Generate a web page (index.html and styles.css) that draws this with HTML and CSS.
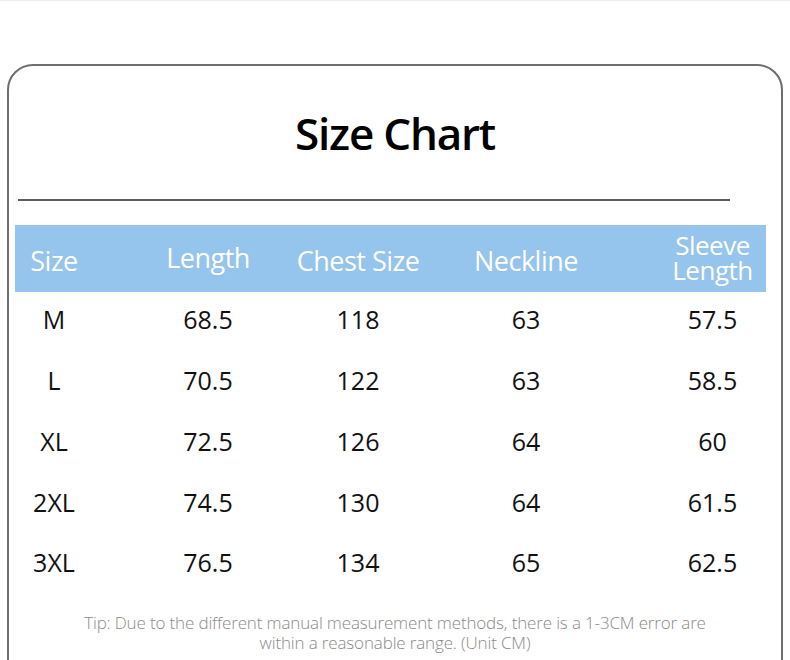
FILE: index.html
```html
<!DOCTYPE html>
<html lang="en">
<head>
<meta charset="utf-8">
<title>Size Chart</title>
<link rel="stylesheet" href="styles.css">
</head>
<body>
<div class="topline"></div>
<div class="card">
  <h1 class="title">Size Chart</h1>
  <div class="divider"></div>
  <div class="table">
    <div class="row head">
      <div class="cell">Size</div>
      <div class="cell up">Length</div>
      <div class="cell">Chest Size</div>
      <div class="cell">Neckline</div>
      <div class="cell two">Sleeve<br>Length</div>
    </div>
    <div class="body">
      <div class="row"><div class="cell">M</div><div class="cell">68.5</div><div class="cell">118</div><div class="cell">63</div><div class="cell">57.5</div></div>
      <div class="row"><div class="cell">L</div><div class="cell">70.5</div><div class="cell">122</div><div class="cell">63</div><div class="cell">58.5</div></div>
      <div class="row"><div class="cell">XL</div><div class="cell">72.5</div><div class="cell">126</div><div class="cell">64</div><div class="cell">60</div></div>
      <div class="row"><div class="cell">2XL</div><div class="cell">74.5</div><div class="cell">130</div><div class="cell">64</div><div class="cell">61.5</div></div>
      <div class="row"><div class="cell">3XL</div><div class="cell">76.5</div><div class="cell">134</div><div class="cell">65</div><div class="cell">62.5</div></div>
    </div>
  </div>
  <p class="tip">Tip: Due to the different manual measurement methods, there is a 1-3CM error are<br>within a reasonable range. (Unit CM)</p>
</div>
</body>
</html>
```
FILE: styles.css
```css
html, body {
  margin: 0;
  padding: 0;
  background: #ffffff;
  overflow: hidden;
}
body {
  width: 790px;
  height: 660px;
  font-family: "Open Sans", "Noto Sans", sans-serif;
}
.topline {
  height: 1px;
  background: #eeeeee;
}
.card {
  margin: 63px 0 0 7px;
  width: 772px;
  height: 700px;
  border: 2px solid #6e6e6e;
  border-radius: 26px;
  box-sizing: content-box;
}
.title {
  margin: 0;
  padding-top: 37px;
  height: 63px;
  text-align: center;
  font-size: 44px;
  line-height: 60px;
  font-weight: 600;
  letter-spacing: -1.2px;
  color: #000;
}
.divider {
  margin: 33px 0 0 9px;
  width: 712px;
  height: 2px;
  background: #5c5c5c;
}
.table {
  margin: 24px 0 0 6px;
  width: 751px;
}
.row {
  display: grid;
  grid-template-columns: 78px 230px 70px 266px 107px;
  height: 60.75px;
}
.head {
  height: 67px;
  background: #95c4ec;
  color: #ffffff;
  font-size: 27px;
  letter-spacing: -0.5px;
}
.head .cell {
  padding-top: 4px;
}
.head .up {
  padding-top: 0;
  padding-bottom: 3px;
}
.head .two {
  font-size: 26px;
  line-height: 25px;
  padding-top: 0;
  padding-bottom: 1px;
  text-align: center;
}
.body {
  margin-top: -3px;
}
.cell {
  display: flex;
  align-items: center;
  justify-content: center;
  white-space: nowrap;
  text-align: center;
}
.body .row {
  font-size: 25px;
  color: #111111;
}
.tip {
  margin: 20px 0 0 0;
  text-align: center;
  font-size: 17px;
  line-height: 20px;
  font-weight: 300;
  letter-spacing: -0.15px;
  color: #8a8a8a;
}
```
